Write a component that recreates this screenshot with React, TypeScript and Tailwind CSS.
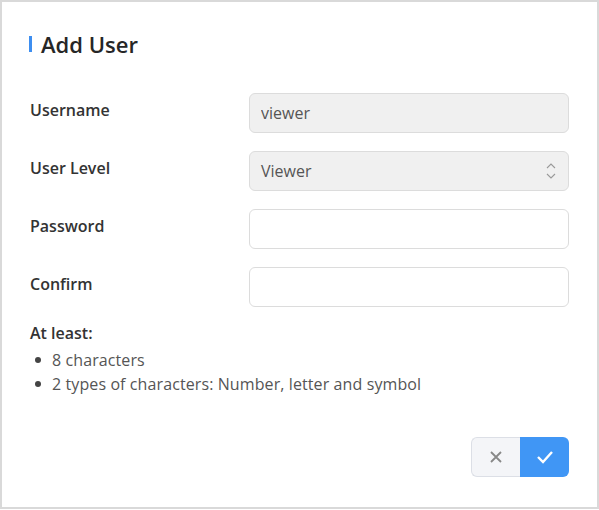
import { useState } from 'react';

// Add User dialog
export default function App() {
  const [password, setPassword] = useState('');
  const [confirm, setConfirm] = useState('');

  const inputBase =
    'w-[320px] h-[40px] px-[11px] rounded-[6px] border border-[#dcdcdc] text-[16px] text-[#555] outline-none';
  const labelBase = 'w-[219px] -mt-[6px] text-[16px] font-semibold';

  return (
    <div
      className="w-[599px] h-[509px] bg-white border-2 border-[#d9d9d9] text-[#333]"
      style={{ fontFamily: '"Open Sans", "Noto Sans", sans-serif' }}
    >
      {/* Header */}
      <div className="flex items-center pl-[27px] pt-[28px]">
        <span className="w-[3px] h-[16px] bg-[#3d8ef0]" />
        <h1 className="ml-[9px] text-[22px] font-semibold leading-[28px] text-[#262626]">Add User</h1>
      </div>

      {/* Form */}
      <div className="pl-[28px] pt-[35px] flex flex-col gap-[18px]">
        <div className="flex items-center">
          <label className={labelBase}>Username</label>
          <input readOnly value="viewer" className={`${inputBase} bg-[#f0f0f0]`} />
        </div>

        <div className="flex items-center">
          <label className={labelBase}>User Level</label>
          <div className={`${inputBase} bg-[#f0f0f0] flex items-center justify-between`}>
            <span>Viewer</span>
            <svg width="12" height="20" viewBox="0 0 12 20" fill="none" stroke="#999" strokeWidth="1.1">
              <path d="M2 7 L6 3 L10 7" />
              <path d="M2 13 L6 17 L10 13" />
            </svg>
          </div>
        </div>

        <div className="flex items-center">
          <label className={labelBase}>Password</label>
          <input
            type="password"
            value={password}
            onChange={(e) => setPassword(e.target.value)}
            className={`${inputBase} bg-white`}
          />
        </div>

        <div className="flex items-center">
          <label className={labelBase}>Confirm</label>
          <input
            type="password"
            value={confirm}
            onChange={(e) => setConfirm(e.target.value)}
            className={`${inputBase} bg-white`}
          />
        </div>
      </div>

      {/* Password rules */}
      <div className="pl-[28px] pt-[14px] text-[16px] leading-[24px]">
        <div className="font-semibold">At least:</div>
        <ul className="mt-[3px] text-[#555] tracking-[0.1px]">
          <li className="flex items-center">
            <span className="w-[6px] h-[6px] rounded-full bg-[#444] ml-[5px] mr-[11px]" />
            8 characters
          </li>
          <li className="flex items-center">
            <span className="w-[6px] h-[6px] rounded-full bg-[#444] ml-[5px] mr-[11px]" />
            2 types of characters: Number, letter and symbol
          </li>
        </ul>
      </div>

      {/* Actions */}
      <div className="flex justify-end pr-[28px] pt-[41px]">
        <button className="w-[49px] h-[40px] flex items-center justify-center bg-[#f4f5f8] border border-[#dcdfe6] border-r-0 rounded-l-[6px]">
          <svg width="14" height="14" viewBox="0 0 14 14" stroke="#888" strokeWidth="1.8">
            <path d="M2 2 L12 12 M12 2 L2 12" />
          </svg>
        </button>
        <button className="w-[49px] h-[40px] flex items-center justify-center bg-[#4096f5] rounded-r-[6px]">
          <svg width="18" height="14" viewBox="0 0 18 14" fill="none" stroke="#fff" strokeWidth="2.4">
            <path d="M2 7 L7 12 L16 2" />
          </svg>
        </button>
      </div>
    </div>
  );
}
